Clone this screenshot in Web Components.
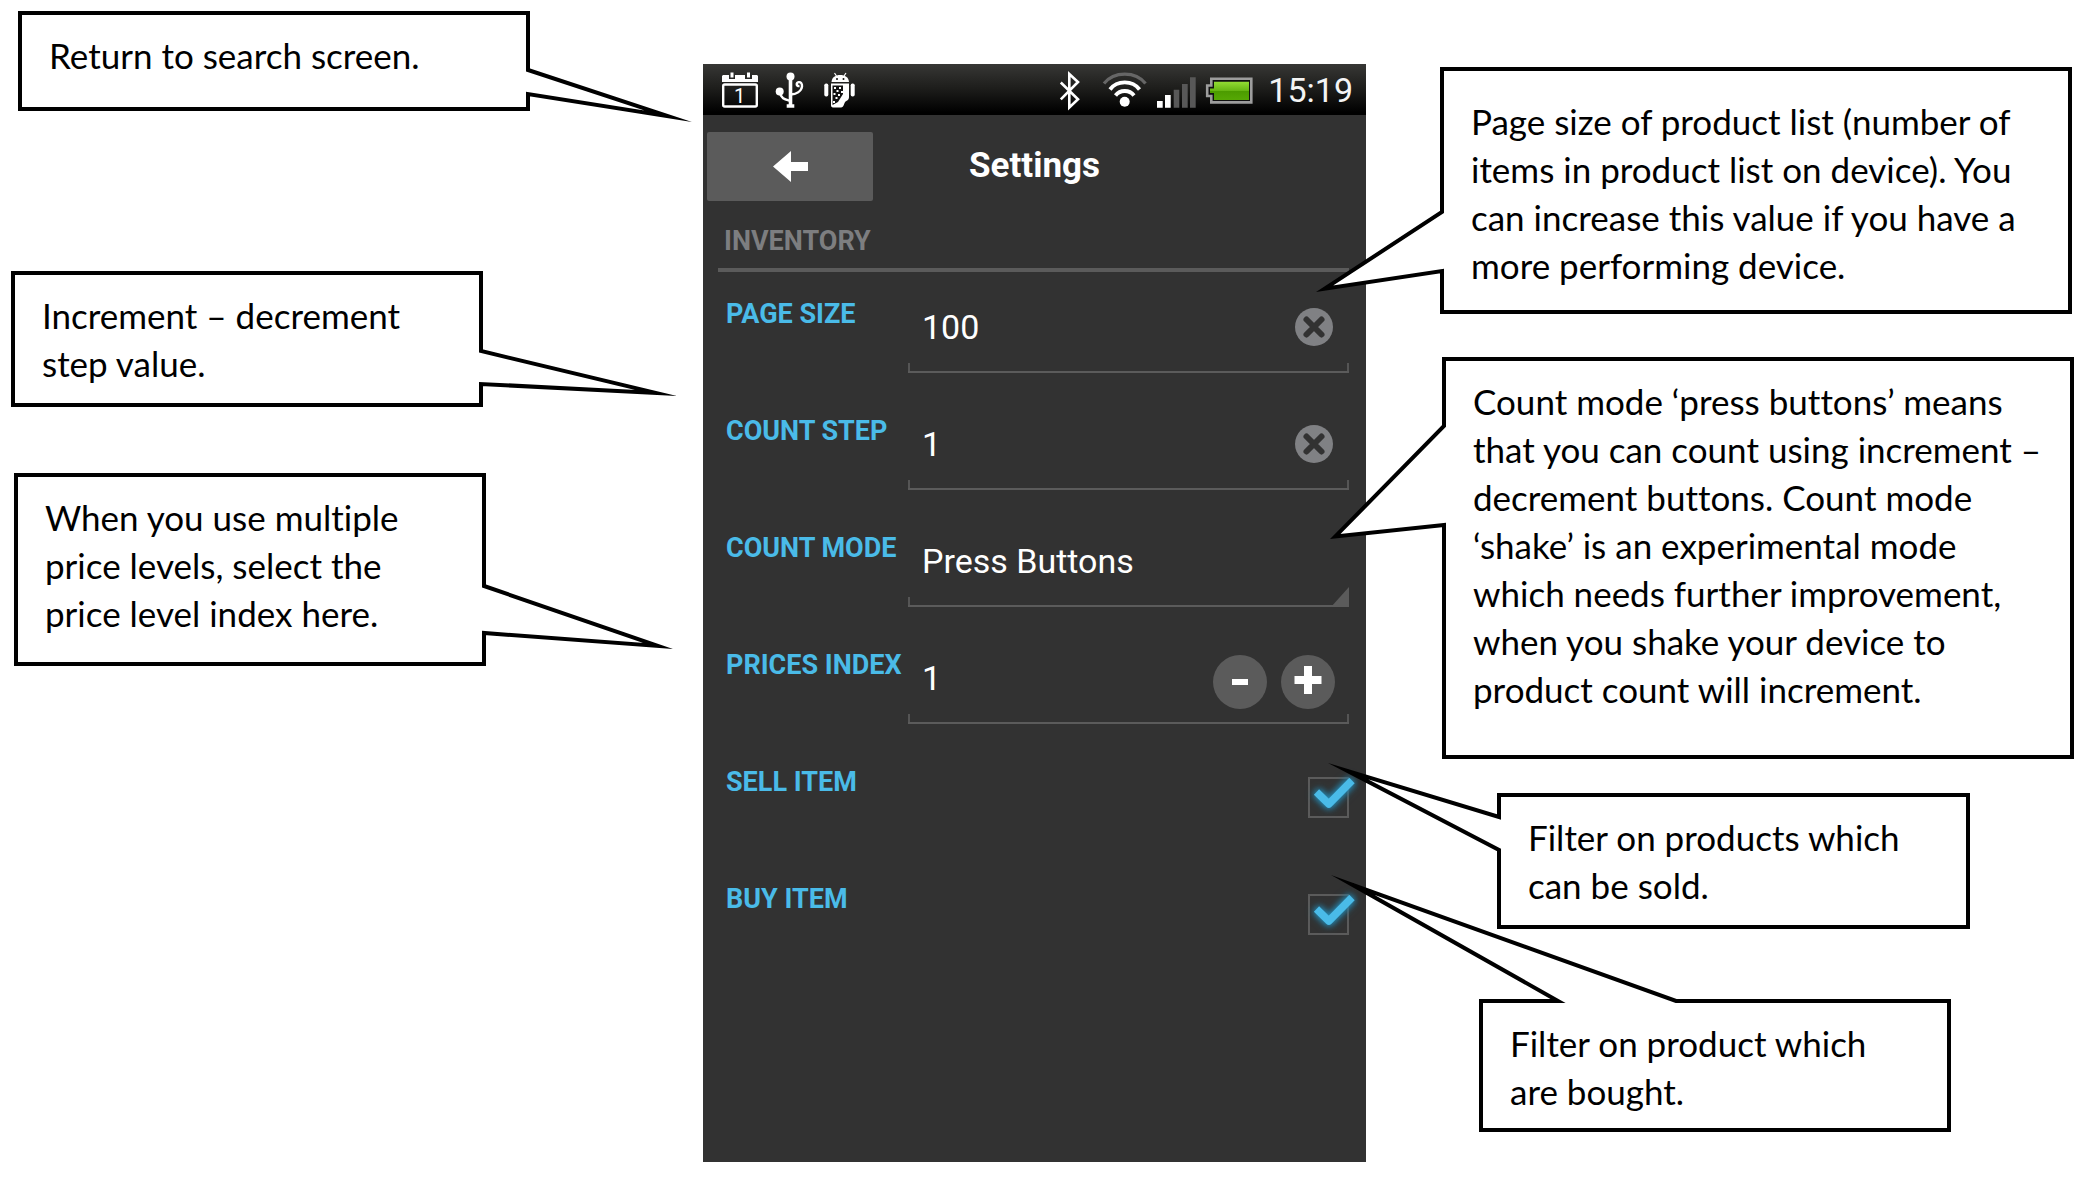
<!DOCTYPE html>
<html lang="en">
<head>
<meta charset="utf-8">
<title>Inventory settings – annotated</title>
<style>
  html, body { margin: 0; background: #fff; }
  body { overflow-x: hidden; }
</style>
</head>
<body>
<annotated-page></annotated-page>

<template id="t-page">
  <style>
    :host { display: grid; grid-template-columns: 703fr 663px 716fr; min-height: 100vh; }
    .notes { position: relative; z-index: 1; display: flex; flex-direction: column; align-items: flex-start; min-width: 0; }
    phone-screen { margin: 64px 0 15px; }
    .return { width: 512px; margin: 11px 0 0 18px; --pad-bottom: 28px; }
    .step { width: 472px; margin: 160px 0 0 11px; }
    .prices { width: 472px; margin: 66px 0 0 14px; --pad-bottom: 25px; }
    .page-size { width: 632px; margin: 67px 0 0 74px; --pad-top: 26px; --pad-bottom: 21px; }
    .mode { width: 632px; margin: 43px 0 0 76px; --pad-bottom: 42px; }
    .sell { width: 473px; margin: 34px 0 0 131px; }
    .buy { width: 472px; margin: 70px 0 0 113px; --pad-bottom: 13px; }
    call-out { box-sizing: border-box; }
  </style>
  <div class="notes">
    <call-out class="return" side="right" base="59 83" tip="164 111">Return to search screen.</call-out>
    <call-out class="step" side="right" base="80 113" tip="196 125">Increment – decrement<br>step value.</call-out>
    <call-out class="prices" side="right" base="113 160" tip="189 176">When you use multiple<br>price levels, select the<br>price level index here.</call-out>
  </div>
  <phone-screen></phone-screen>
  <div class="notes">
    <call-out class="page-size" side="left" base="145 204" tip="-126 225">Page size of product list (number of<br>items in product list on device). You<br>can increase this value if you have a<br>more performing device.</call-out>
    <call-out class="mode" side="left" base="69 168" tip="-114 182">Count mode ‘press buttons’ means<br>that you can count using increment –<br>decrement buttons. Count mode<br>‘shake’ is an experimental mode<br>which needs further improvement,<br>when you shake your device to<br>product count will increment.</call-out>
    <call-out class="sell" side="left" base="24 57" tip="-171 -30">Filter on products which<br>can be sold.</call-out>
    <call-out class="buy" side="top" base="79 197" tip="-150 -124">Filter on product which<br>are bought.</call-out>
  </div>
</template>

<template id="t-callout">
  <style>
    :host {
      display: block; position: relative; background: #fff; border: 4px solid #000;
      padding: var(--pad-top, 16px) 0 var(--pad-bottom, 16px) 27px;
      font: 35px/48px Lato, "Open Sans", sans-serif; font-variant-ligatures: none; color: #000; white-space: nowrap;
    }
    p { margin: 0; }
    svg { position: absolute; top: -4px; left: -4px; width: 1px; height: 1px; overflow: visible; pointer-events: none; }
    :host([side="right"]) svg { left: 100%; }
    .line { fill: none; stroke: #000; stroke-width: 4; stroke-miterlimit: 60; }
    .fill { fill: #fff; }
  </style>
  <svg aria-hidden="true"><path class="fill"/><path class="line"/></svg>
  <p><slot></slot></p>
</template>

<template id="t-phone">
  <style>
    :host { display: flex; flex-direction: column; background: #323232; color: #fff; font-family: Roboto, sans-serif; }
    header { display: grid; grid-template-columns: 166px 1fr 166px; align-items: center; padding: 17px 4px 16px; }
    button { height: 69px; border: 0; border-radius: 2px; background: #5b5b5b; padding: 0; display: flex; align-items: center; justify-content: center; }
    h1 { margin: 0; padding-bottom: 2px; text-align: center; font-size: 35px; line-height: 40px; font-weight: 700; }
    main { padding: 0 17px 0 15px; }
    h2 { margin: 0 0 1px; padding: 8px 6px 11px; border-bottom: 4px solid #5b5b5b; color: #7d7e80; font-size: 27px; line-height: 32px; font-weight: 700; }
  </style>
  <status-bar></status-bar>
  <header>
    <button type="button" aria-label="Back"><svg width="35" height="31" viewBox="0 0 35 31"><path fill="#fff" d="M0 15.500 18 0V11H35V20H18V31Z"/></svg></button>
    <h1>Settings</h1>
  </header>
  <main>
    <h2>INVENTORY</h2>
    <setting-row kind="text" label="PAGE SIZE" value="100"></setting-row>
    <setting-row kind="text" label="COUNT STEP" value="1"></setting-row>
    <setting-row kind="select" label="COUNT MODE" value="Press Buttons"></setting-row>
    <setting-row kind="stepper" label="PRICES INDEX" value="1"></setting-row>
    <setting-row kind="check" label="SELL ITEM"></setting-row>
    <setting-row kind="check" label="BUY ITEM"></setting-row>
  </main>
</template>

<template id="t-status">
  <style>
    :host { display: flex; justify-content: space-between; height: 51px; padding: 0 13px 0 19px; background: linear-gradient(#373735, #1c1c1a 50%, #000 95%); }
    div { display: flex; gap: 16px; }
    .right { gap: 10px; }
    svg { display: block; overflow: visible; }
    time { font-size: 34px; line-height: 52px; color: #f4f4f4; }
    text { font: 20px Roboto, sans-serif; fill: #fff; }
  </style>
  <div>
    <svg width="36" height="51" viewBox="0 0 36 51">
      <path fill="#fff" d="M1 11H7V15H13V11H23V15H30V11H35L36 12V18H0V12Z"/>
      <path fill="#fff" d="M8.500 8.500h3v5h-3zM25 8.500h3v5h-3z"/>
      <rect x="1.200" y="20.500" width="33.600" height="22" rx="1.500" fill="none" stroke="#fff" stroke-width="2.400"/>
      <text x="12" y="38.500">1</text>
    </svg>
    <svg width="34" height="51" viewBox="0 0 34 51" fill="none" stroke="#fff">
      <path stroke-width="3.600" d="M16.500 12V42"/>
      <path stroke-width="2.400" d="M5.700 28C7 35 11 35.500 16.500 37M16.500 30.500C22 30 27.500 27.500 28 22.500 28.300 19.500 26.500 17.800 24.700 18.200 22 18.800 22 22.500 25.500 22"/>
      <circle cx="16.500" cy="12.500" r="4" fill="#fff" stroke="none"/>
      <circle cx="5.700" cy="27.500" r="4" fill="#fff" stroke="none"/>
      <path fill="#fff" stroke="none" d="M12.700 40.300h7.600v3.500h-7.600z"/>
    </svg>
    <svg width="32" height="51" viewBox="0 0 32 51">
      <path stroke="#fff" stroke-width="1.200" d="M10.500 9 12.500 12M22 9 20 12"/>
      <path fill="#fff" d="M7.500 18C8 13 11.500 11 16.200 11S24.500 13 25 18Z"/>
      <circle cx="13" cy="15" r="1" fill="#111"/><circle cx="19.500" cy="15" r="1" fill="#111"/>
      <rect x=".3" y="19.500" width="4" height="13" rx="1.800" fill="#fff"/>
      <rect x="26.700" y="19.500" width="4" height="13" rx="1.800" fill="#fff"/>
      <path fill="#fff" d="M7 19.500H25V33C25 36 23 36.500 21.500 37.500 20 39 20 43.500 17 43.500H9C7.500 43.500 7 42.500 7 41Z"/>
      <path fill="#111" d="M8.500 21.500H19V30L14 38 8.500 41Z"/>
      <path fill="#fff" d="M10 23h2v2h-2zM15 23h2v2h-2zM12.500 26h2v2h-2zM17 27h2v2h-2zM9.500 29h2v2h-2zM14 30h2v2h-2zM11.500 33h2v2h-2zM9 37h2v2h-2z"/>
    </svg>
  </div>
  <div class="right">
    <svg width="33" height="51" viewBox="0 0 33 51"><path fill="none" stroke="#fff" stroke-width="2.600" d="M.8 18.500 18 35.300 9.300 43.500V10L18 18 .8 35.300"/></svg>
    <svg width="44" height="51" viewBox="0 0 44 51" fill="none" stroke="#fff" stroke-width="3.800">
      <path stroke="#666" stroke-width="3.200" d="M1 19.500C11 7 32.500 7 42.500 19.500"/>
      <path d="M7 25.500C14 16 29.500 16 36.500 25.500"/>
      <path d="M12.500 31.500C17 25.500 26.500 25.500 31 31.500"/>
      <circle cx="21.700" cy="37.700" r="5" fill="#fff" stroke="none"/>
    </svg>
    <svg width="39" height="51" viewBox="0 0 39 51">
      <path fill="#fff" d="M0 37h5.700v6.700H0zM8 31h5.700v12.700H8z"/>
      <path fill="#585858" d="M16.700 25.700h5.600v18h-5.600zM25 20h5.700v23.700H25zM33 13.300h5.700v30.400H33z"/>
    </svg>
    <svg width="52" height="51" viewBox="0 0 52 51">
      <defs><linearGradient id="g" x1="0" y1="0" x2="0" y2="1"><stop offset="0" stop-color="#93dc34"/><stop offset=".48" stop-color="#68b714"/><stop offset=".52" stop-color="#4c9c00"/><stop offset="1" stop-color="#56a804"/></linearGradient></defs>
      <path fill="#111" stroke="#9d9d9d" stroke-width="2.600" d="M5.300 14.700H45.300V38.400H5.300V32H1.200V21.500H5.300Z"/>
      <path fill="url(#g)" d="M8 17.700H43V36H8V29H4V24.500H8Z"/>
    </svg>
    <time>15:19</time>
  </div>
</template>

<template id="t-row">
  <style>
    :host { display: grid; grid-template-columns: 190px 1fr; height: 117px; box-sizing: border-box; }
    label { padding: 25px 0 0 8px; font-size: 27px; line-height: 32px; font-weight: 700; color: #4abbe8; white-space: nowrap; }
    .field {
      margin: 10px 0 17px; display: flex; align-items: center; border-bottom: 2px solid #5b5b5b; position: relative;
      background: linear-gradient(#555, #555) 0 100% / 2px 8px no-repeat, linear-gradient(#555, #555) 100% 100% / 2px 8px no-repeat;
    }
    input, select { font: 34px/40px Roboto, sans-serif; color: #fff; background: none; border: 0; padding: 0; margin: 0; outline: 0; appearance: none; border-radius: 0; }
    input[type="text"], select { flex: 1; min-width: 0; width: 100%; padding-left: 14px; height: 88px; }
    option { background: #323232; }
    button { flex: none; border: 0; padding: 0; background: none; display: block; }
    svg { display: block; overflow: visible; }
    .clear { margin-right: 16px; }
    .minus, .plus { margin-right: 14px; align-self: flex-end; margin-bottom: 13px; }
    .corner { position: absolute; right: 0; bottom: -2px; pointer-events: none; }
    .check { justify-self: end; position: relative; margin-top: 36px; width: 41px; height: 41px; }
    .check input { display: block; width: 41px; height: 41px; box-sizing: border-box; border: 2px solid #5b5b5b; }
    .check svg { position: absolute; inset: 0; pointer-events: none; display: none; filter: drop-shadow(0 0 3px #2b8fb8) drop-shadow(0 0 3px #1f6c8c); }
    .check input:checked + svg { display: block; }
  </style>
  <label for="c"></label>
</template>

<script>
  const tpl = id => document.getElementById(id).content.cloneNode(true);
  const mount = (el, id) => {
    if (!el.shadowRoot) el.attachShadow({ mode: 'open' }).append(tpl(id));
    return el.shadowRoot;
  };

  customElements.define('call-out', class extends HTMLElement {
    connectedCallback() {
      const root = mount(this, 't-callout');
      const [a, b] = this.getAttribute('base').split(' ').map(Number);
      const [tx, ty] = this.getAttribute('tip').split(' ').map(Number);
      const side = this.getAttribute('side');
      // The two roots of the tail sit on the centre line of the border.
      const p = side === 'top' ? [a, 2] : [2, a];
      const q = side === 'top' ? [b, 2] : [2, b];
      const goal = [tx + 2, ty];
      // Pull the vertex back so that the mitred point ends at the wanted tip.
      let v = goal.slice();
      for (let i = 0; i < 60; i++) {
        const u = [v[0] - p[0], v[1] - p[1]], w = [v[0] - q[0], v[1] - q[1]];
        const lu = Math.hypot(...u), lw = Math.hypot(...w);
        const d = [u[0] / lu + w[0] / lw, u[1] / lu + w[1] / lw], ld = Math.hypot(...d);
        const half = Math.acos(Math.min(1, ld / 2));
        const ext = 2 / Math.sin(half);
        v = [goal[0] - d[0] / ld * ext, goal[1] - d[1] / ld * ext];
      }
      const n = 6;
      const before = side === 'top' ? [a - n, 2] : [2, a - n];
      const after = side === 'top' ? [b + n, 2] : [2, b + n];
      const inX = side === 'right' ? -3 : side === 'left' ? 3 : 0;
      const inY = side === 'top' ? 3 : 0;
      const pt = list => 'M' + list.map(c => c.map(k => k.toFixed(2)).join(' ')).join('L');
      root.querySelector('.fill').setAttribute('d', pt([p, v, q, [q[0] + inX, q[1] + inY], [p[0] + inX, p[1] + inY]]) + 'Z');
      root.querySelector('.line').setAttribute('d', pt([before, p, v, q, after]));
    }
  });

  customElements.define('status-bar', class extends HTMLElement {
    connectedCallback() { mount(this, 't-status'); }
  });

  const controls = {
    text: v => `<div class="field"><input id="c" type="text" value="${v}">
      <button class="clear" type="button" aria-label="Clear"><svg width="38" height="38" viewBox="0 0 38 38"><circle cx="19" cy="19" r="19" fill="#808184"/><path d="M11.500 11.500 26.500 26.500M26.500 11.500 11.500 26.500" stroke="#323232" stroke-width="6" stroke-linecap="round"/></svg></button></div>`,
    select: v => `<div class="field"><select id="c"><option>${v}</option><option>Shake</option></select>
      <svg class="corner" width="18" height="20" viewBox="0 0 18 20"><path d="M18 0V20H0Z" fill="#5b5b5b"/></svg></div>`,
    stepper: v => `<div class="field"><input id="c" type="text" value="${v}">
      <button class="minus" type="button" aria-label="Decrease"><svg width="54" height="54" viewBox="0 0 54 54"><circle cx="27" cy="27" r="27" fill="#5b5b5b"/><path d="M19 24h16v6H19z" fill="#fff"/></svg></button>
      <button class="plus" type="button" aria-label="Increase"><svg width="54" height="54" viewBox="0 0 54 54"><circle cx="27" cy="27" r="27" fill="#5b5b5b"/><path d="M23 11h8v10h9.500v8H31v10h-8V29h-9.500v-8H23z" fill="#fff"/></svg></button></div>`,
    check: () => `<span class="check"><input id="c" type="checkbox" checked>
      <svg width="41" height="41" viewBox="0 0 41 41"><path d="M8.500 15 20.800 27 44 3.500" fill="none" stroke="#4abbe8" stroke-width="7.500" stroke-linejoin="round"/></svg></span>`
  };

  customElements.define('setting-row', class extends HTMLElement {
    connectedCallback() {
      if (this.shadowRoot) return;
      const root = mount(this, 't-row');
      root.querySelector('label').textContent = this.getAttribute('label');
      const box = document.createElement('template');
      box.innerHTML = controls[this.getAttribute('kind')](this.getAttribute('value'));
      root.append(box.content);
    }
  });

  customElements.define('phone-screen', class extends HTMLElement {
    connectedCallback() { mount(this, 't-phone'); }
  });

  customElements.define('annotated-page', class extends HTMLElement {
    connectedCallback() { mount(this, 't-page'); }
  });
</script>
</body>
</html>
